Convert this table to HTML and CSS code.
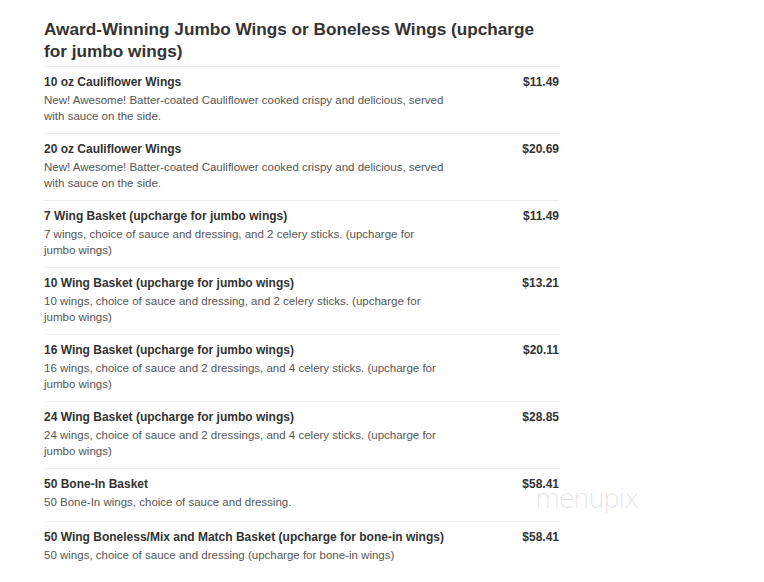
FILE: index.html
```html
<!DOCTYPE html>
<html>
<head>
<meta charset="utf-8">
<link rel="stylesheet" href="styles.css">
</head>
<body>
<div class="menu">
  <h2 class="section-title">Award-Winning Jumbo Wings or Boneless Wings (upcharge for jumbo wings)</h2>
  <div class="item">
    <div class="info"><div class="name">10 oz Cauliflower Wings</div><div class="desc">New! Awesome! Batter-coated Cauliflower cooked crispy and delicious, served with sauce on the side.</div></div>
    <div class="price">$11.49</div>
  </div>
  <div class="item">
    <div class="info"><div class="name">20 oz Cauliflower Wings</div><div class="desc">New! Awesome! Batter-coated Cauliflower cooked crispy and delicious, served with sauce on the side.</div></div>
    <div class="price">$20.69</div>
  </div>
  <div class="item">
    <div class="info"><div class="name">7 Wing Basket (upcharge for jumbo wings)</div><div class="desc">7 wings, choice of sauce and dressing, and 2 celery sticks. (upcharge for jumbo wings)</div></div>
    <div class="price">$11.49</div>
  </div>
  <div class="item">
    <div class="info"><div class="name">10 Wing Basket (upcharge for jumbo wings)</div><div class="desc">10 wings, choice of sauce and dressing, and 2 celery sticks. (upcharge for jumbo wings)</div></div>
    <div class="price">$13.21</div>
  </div>
  <div class="item">
    <div class="info"><div class="name">16 Wing Basket (upcharge for jumbo wings)</div><div class="desc">16 wings, choice of sauce and 2 dressings, and 4 celery sticks. (upcharge for jumbo wings)</div></div>
    <div class="price">$20.11</div>
  </div>
  <div class="item">
    <div class="info"><div class="name">24 Wing Basket (upcharge for jumbo wings)</div><div class="desc">24 wings, choice of sauce and 2 dressings, and 4 celery sticks. (upcharge for jumbo wings)</div></div>
    <div class="price">$28.85</div>
  </div>
  <div class="item single">
    <div class="info"><div class="name">50 Bone-In Basket</div><div class="desc">50 Bone-In wings, choice of sauce and dressing.</div></div>
    <div class="price">$58.41</div>
  </div>
  <div class="item">
    <div class="info"><div class="name">50 Wing Boneless/Mix and Match Basket (upcharge for bone-in wings)</div><div class="desc">50 wings, choice of sauce and dressing (upcharge for bone-in wings)</div></div>
    <div class="price">$58.41</div>
  </div>
  <div class="watermark">menupix</div>
</div>
</body>
</html>
```
FILE: styles.css
```css
html, body {
  margin: 0;
  padding: 0;
  background: #fff;
}
body {
  font-family: "Liberation Sans", Arial, sans-serif;
  color: #333;
}
.menu {
  position: relative;
  width: 515px;
  margin-left: 44px;
  padding-top: 18px;
}
.section-title {
  margin: 0 0 4px 0;
  padding-right: 12px;
  font-size: 17.2px;
  line-height: 22px;
  font-weight: bold;
  color: #333;
}
.item {
  display: flex;
  justify-content: space-between;
  border-top: 1px solid #ececec;
  padding: 8px 0 9px 0;
}
.item.single {
  padding-bottom: 11px;
}
.info {
  width: 401px;
}
.name {
  font-size: 12px;
  font-weight: bold;
  line-height: 14px;
  color: #333;
}
.desc {
  margin-top: 3px;
  font-size: 11.5px;
  line-height: 16px;
  color: #555;
}
.price {
  font-size: 12px;
  font-weight: bold;
  line-height: 14px;
  color: #333;
}
.watermark {
  position: absolute;
  left: 491px;
  top: 486px;
  font-family: "DejaVu Sans", sans-serif;
  font-weight: 200;
  font-size: 26px;
  line-height: 26px;
  letter-spacing: -1.5px;
  color: rgba(0, 0, 0, 0.12);
}
```
